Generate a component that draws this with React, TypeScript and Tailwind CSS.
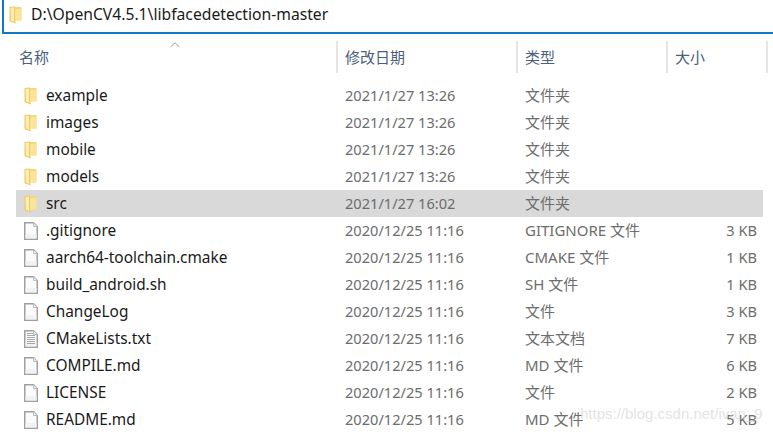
const FONT = "font-['Noto_Sans','Noto_Sans_CJK_SC',sans-serif]";

function Folder() {
  return (
    <svg width="13" height="18" viewBox="0 0 13 18" className="shrink-0">
      <path d="M5 1 H12.5 V14.5 H5 Z" fill="#f6d77a" />
      <path d="M6 3 H12.5 V14.5 H6 Z" fill="#fbe499" />
      <path d="M0.5 1 L6 0.5 V14 L7 17.5 L1 15.5 L0.5 14.5 Z" fill="#f0c95f" />
      <path d="M1.5 2 L5 1.6 V14.5 L5.5 16 L2 14.6 Z" fill="#fdedb6" />
    </svg>
  );
}

function FileIcon({ lines }: { lines?: boolean }) {
  return (
    <svg width="14" height="18" viewBox="0 0 14 18" className="shrink-0">
      <path d="M0.75 0.75 H9.5 L13.25 4.5 V17.25 H0.75 Z" fill="#fbfbfb" stroke="#a0a0a0" strokeWidth="1.5" />
      <path d="M9.5 0.75 V4.5 H13.25" fill="#ececec" stroke="#bdbdbd" />
      <rect x="1.5" y="12" width="11" height="4.5" fill="#f2f2f2" />
      {lines && (
        <g stroke="#a8a8a8">
          <path d="M3 3.5 H9" />
          <path d="M3 5.5 H11" />
          <path d="M3 7.5 H11" />
          <path d="M3 9.5 H11" />
          <path d="M3 11.5 H11" />
          <path d="M3 13.5 H11" />
        </g>
      )}
    </svg>
  );
}

type Row = { n: string; d: string; t: string; s?: string; k: "folder" | "file" | "text"; sel?: boolean };

const rows: Row[] = [
  { n: "example", d: "2021/1/27 13:26", t: "文件夹", k: "folder" },
  { n: "images", d: "2021/1/27 13:26", t: "文件夹", k: "folder" },
  { n: "mobile", d: "2021/1/27 13:26", t: "文件夹", k: "folder" },
  { n: "models", d: "2021/1/27 13:26", t: "文件夹", k: "folder" },
  { n: "src", d: "2021/1/27 16:02", t: "文件夹", k: "folder", sel: true },
  { n: ".gitignore", d: "2020/12/25 11:16", t: "GITIGNORE 文件", s: "3 KB", k: "file" },
  { n: "aarch64-toolchain.cmake", d: "2020/12/25 11:16", t: "CMAKE 文件", s: "1 KB", k: "file" },
  { n: "build_android.sh", d: "2020/12/25 11:16", t: "SH 文件", s: "1 KB", k: "file" },
  { n: "ChangeLog", d: "2020/12/25 11:16", t: "文件", s: "3 KB", k: "file" },
  { n: "CMakeLists.txt", d: "2020/12/25 11:16", t: "文本文档", s: "7 KB", k: "text" },
  { n: "COMPILE.md", d: "2020/12/25 11:16", t: "MD 文件", s: "6 KB", k: "file" },
  { n: "LICENSE", d: "2020/12/25 11:16", t: "文件", s: "2 KB", k: "file" },
  { n: "README.md", d: "2020/12/25 11:16", t: "MD 文件", s: "5 KB", k: "file" },
];

export default function App() {
  return (
    <div className={`relative w-[773px] h-[436px] overflow-hidden bg-white ${FONT}`}>
      <div className="h-[34px] ml-[2px] flex items-center pl-[5px] pb-[2px] border-l-2 border-b-2 border-[#0f78c8]">
        <Folder />
        <span className="ml-[9px] text-[15.7px] text-[#1a1a1a]">D:\OpenCV4.5.1\libfacedetection-master</span>
      </div>

      <div className="relative mt-[7px] h-[32px] flex text-[15px] text-[#4c607a]">
        <svg width="10" height="6" viewBox="0 0 10 6" className="absolute left-[170px] top-[1px]">
          <path d="M0.5 5 L5 0.8 L9.5 5" fill="none" stroke="#9a9a9a" />
        </svg>
        <div className="w-[338px] pl-[19px] flex items-center border-r-2 border-[#e5e5e5]">名称</div>
        <div className="w-[180px] pl-[7px] flex items-center border-r-2 border-[#e5e5e5]">修改日期</div>
        <div className="w-[150px] pl-[7px] flex items-center border-r-2 border-[#e5e5e5]">类型</div>
        <div className="w-[100px] pl-[7px] flex items-center border-r-2 border-[#e5e5e5]">大小</div>
      </div>

      <div className="mt-[9px] ml-[16px] w-[747px] flex flex-col">
        {rows.map((r) => (
          <div key={r.n} className={`h-[27px] flex items-center ${r.sel ? "bg-[#d9d9d9]" : ""}`}>
            <div className="w-[30px] pl-[8px] flex items-center">
              {r.k === "folder" ? <Folder /> : <FileIcon lines={r.k === "text"} />}
            </div>
            <div className="w-[299px] text-[15.4px] text-[#1a1a1a] whitespace-nowrap">{r.n}</div>
            <div className="w-[180px] text-[14.6px] text-[#6d6d6d] whitespace-nowrap">{r.d}</div>
            <div className="w-[150px] text-[15px] text-[#6d6d6d] whitespace-nowrap">{r.t}</div>
            <div className="w-[82px] text-right text-[14.6px] text-[#6d6d6d] whitespace-nowrap">{r.s}</div>
          </div>
        ))}
      </div>

      <div className="absolute left-[580px] top-[403px] text-[15px] text-[#d6d6d6]/70 font-['Liberation_Sans',sans-serif] whitespace-nowrap">
        https://blog.csdn.net/ivan_9
      </div>
    </div>
  );
}
